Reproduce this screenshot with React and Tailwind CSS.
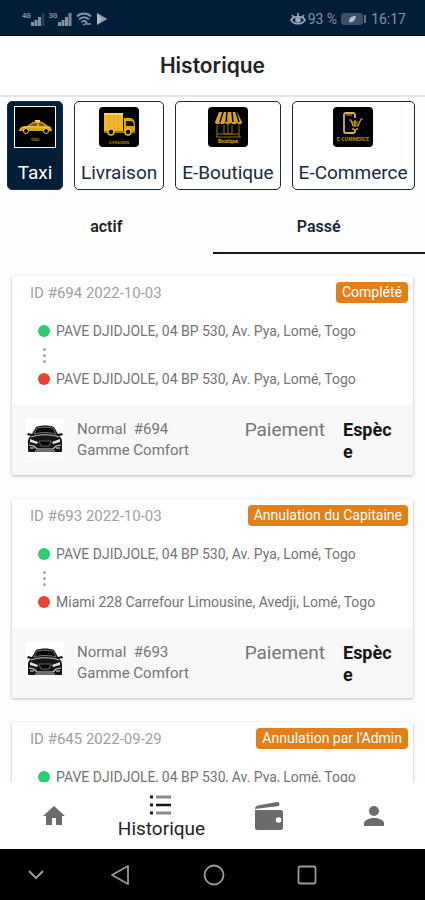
import React from "react";

function SignalBars({ label }) {
  return (
    <span className="flex items-start">
      <span className="text-[7px] leading-[8px] font-bold">{label}</span>
      <svg width="14" height="14" viewBox="0 0 14 14" fill="currentColor" aria-hidden="true">
        <rect x="0" y="10" width="3" height="4" />
        <rect x="3.500" y="8" width="3" height="6" />
        <rect x="7" y="5" width="3" height="9" />
        <rect x="10.500" y="1" width="3" height="13" opacity={label === "4G" ? 0.3 : 0.9} />
      </svg>
    </span>
  );
}

function StatusBar() {
  return (
    <div className="flex h-9 shrink-0 items-center justify-between border-b border-black bg-[#021d37] pt-0.5 pr-[19px] pl-[22px] text-[#8593a3]">
      <div className="flex items-center gap-1">
        <SignalBars label="4G" />
        <SignalBars label="3G" />
        <svg width="16" height="14" viewBox="0 0 16 14" fill="none" stroke="currentColor" strokeWidth="1.800" aria-hidden="true">
          <path d="M1 4.500C5 0.500 11 0.500 15 4.500M3 7.500c3-3 7-3 10 0M5.500 10c1.500-1.500 3.500-1.500 5 0" />
          <path d="M7 12.500h1.500M11 10l-1.500 2H15" strokeWidth="1.500" />
        </svg>
        <svg width="12" height="14" viewBox="0 0 12 14" aria-hidden="true">
          <path d="M1 1l10.500 6L1 13z" fill="#8f9baa" />
          <path d="M1 1l5 6-5 6z" fill="#b5bdc6" />
        </svg>
      </div>
      <div className="flex items-center text-[15px] leading-5">
        <svg width="16" height="14" viewBox="0 0 16 14" fill="none" stroke="#a0abb7" strokeWidth="1.600" aria-hidden="true">
          <path d="M1 8c3-4.500 11-4.500 14 0-3 5-11 5-14 0z" />
          <circle cx="8" cy="8" r="2" fill="#a0abb7" />
          <path d="M2 3l1.500 2M8 1v3M14 3l-1.500 2" />
        </svg>
        <span className="ml-0.5 text-[14px]">93 %</span>
        <svg className="mx-1" width="26" height="14" viewBox="0 0 26 14" aria-hidden="true">
          <rect x="0" y="1" width="22" height="12" rx="3" fill="#3c5064" />
          <path d="M8 10c0-4 2-6 7-6-1 5-3 7-7 6z" fill="#b4bdc6" />
          <path d="M24 3v8" stroke="#66788a" strokeWidth="2" />
        </svg>
        <span className="text-[14px]">16:17</span>
      </div>
    </div>
  );
}

const gold = "#d9a520";

function TaxiArt() {
  return (
    <svg className="size-full" viewBox="0 0 40 40" aria-hidden="true">
      <path d="M4 24c0-3 3-5 8-5l6-4c4-1 8-1 11 1l4 3c3 0 4 3 4 5z" fill={gold} />
      <path d="M14 19l5-3h3v3zM24 16h3l3 3h-6z" fill="#7d5a0a" />
      <path d="M20 15v-2h5v2z" fill="#f4ce55" />
      <path d="M6 21c7-2 20-1 29 0" stroke="#f4ce55" fill="none" />
      <circle cx="11" cy="24" r="2.500" fill="#000" stroke="#f0c23a" />
      <circle cx="31" cy="24" r="2.500" fill="#000" stroke="#f0c23a" />
      <text x="20" y="34" textAnchor="middle" fontSize="4" fontWeight="700" fill="#a98118">TAXI</text>
    </svg>
  );
}

function TruckArt() {
  return (
    <svg className="size-full" viewBox="0 0 40 40" aria-hidden="true">
      <rect x="5" y="6" width="19" height="18" fill="#efb72c" />
      <path d="M5 6h19v2H5z" fill="#f8d465" />
      <path d="M10 8v16M15 8v16M19 8v16" stroke="#cf9a24" strokeWidth="0.600" />
      <path d="M25 11h6c4 0 5 4 5 7v7H25z" fill={gold} />
      <path d="M27 14h5c2 0 3 3 3 5h-8z" fill="#1c1503" />
      <path d="M5 24h31v2H5z" fill="#a77410" />
      <circle cx="12" cy="25" r="3" fill="#000" stroke="#efb72c" strokeWidth="1.500" />
      <circle cx="29" cy="25" r="3" fill="#000" stroke="#efb72c" strokeWidth="1.500" />
      <text x="20" y="37" textAnchor="middle" fontSize="4" fontWeight="700" fill="#a98118">LIVRAISON</text>
    </svg>
  );
}

function ShopArt() {
  return (
    <svg className="size-full" viewBox="0 0 40 40" aria-hidden="true">
      <path d="M11 5h18l5 10c0 3-5 3-5 0 0 3-6 3-6 0 0 3-6 3-6 0 0 3-5 3-5 0 0 3-5 3-5 0z" fill={gold} />
      <path d="M15 5l-3 10M19 5l-1 10M24 5l1 10M28 5l3 10" stroke="#000" strokeWidth="1.500" />
      <path d="M9 18v12M31 18v12M8 30h25M16 18v9h8v-9M20 11v16M9 27h22" stroke="#96701a" fill="none" />
      <text x="20" y="36" textAnchor="middle" fontSize="5" fontWeight="700" fill={gold}>Boutique</text>
    </svg>
  );
}

function CommerceArt() {
  return (
    <svg className="size-full" viewBox="0 0 40 40" aria-hidden="true">
      <path d="M22 11V8c0-1-1-2-2-2h-7c-1 0-2 1-2 2v16c0 1 1 2 2 2h7c1 0 2-1 2-2v-2" fill="none" stroke="#d6b159" strokeWidth="1.800" />
      <path d="M13 8h6" stroke="#d6b159" />
      <path d="M16 13h2l2 6h5l3-7h2M19 15h6M20 17h6M22 13v6" fill="none" stroke={gold} strokeWidth="1.200" />
      <circle cx="20" cy="22" r="1" fill={gold} />
      <circle cx="24" cy="22" r="1" fill={gold} />
      <text x="20" y="34" textAnchor="middle" fontSize="5" fontWeight="700" fill="#b48b25">E-COMMERCE</text>
    </svg>
  );
}

const services = [
  { name: "Taxi", Art: TaxiArt, selected: true },
  { name: "Livraison", Art: TruckArt },
  { name: "E-Boutique", Art: ShopArt },
  { name: "E-Commerce", Art: CommerceArt },
];

function ServiceButton({ name, Art, selected }) {
  return (
    <button
      type="button"
      aria-pressed={Boolean(selected)}
      className={
        "flex flex-col items-center justify-between rounded-[5px] border border-[#1c2b3b] px-1.5 pt-1 pb-[3px] " +
        (selected ? "bg-[#021d37] text-white" : "bg-white text-[#182b40]")
      }
    >
      <span
        className={
          "block overflow-hidden bg-black " +
          (selected ? "size-[42px] border border-white" : "mt-px size-10 rounded-[4px]")
        }
      >
        <Art />
      </span>
      <span className="text-[19px] leading-[26px]">{name}</span>
    </button>
  );
}

function CarIcon() {
  return (
    <svg className="shrink-0 bg-white" width="38" height="38" viewBox="0 0 38 38" aria-hidden="true">
      <path d="M10 8c5-2 13-2 18 0l4 7 4-1 1 2-4 1c3 2 3 4 3 7v8c0 1-1 1-2 1H4c-1 0-2 0-2-1v-8c0-3 0-5 3-7l-4-1 1-2 4 1z" fill="#151515" />
      <path d="M11 9c5-1 11-1 16 0l3 6c-6-2-16-2-22 0z" fill="#000" stroke="#8a8a8a" strokeWidth="0.800" />
      <path d="M5 18c8-3 20-3 28 0" stroke="#c4c4c4" fill="none" />
      <path d="M4 20l8 3-1 2-7-2zM34 20l-8 3 1 2 7-2z" fill="#e2e2e2" />
      <path d="M13 22h12l-2 5h-8z" fill="#000" stroke="#777" strokeWidth="0.800" />
      <path d="M3 26l5 1 3 3h16l3-3 5-1" stroke="#d4d4d4" strokeWidth="1.200" fill="none" />
      <path d="M9 32h20" stroke="#a8a8a8" strokeWidth="1.200" />
      <path d="M4 29h4M30 29h4" stroke="#eee" strokeWidth="1.200" />
    </svg>
  );
}

const trips = [
  {
    id: "694",
    date: "2022-10-03",
    status: "Complété",
    from: "PAVE DJIDJOLE, 04 BP 530, Av. Pya, Lomé, Togo",
    to: "PAVE DJIDJOLE, 04 BP 530, Av. Pya, Lomé, Togo",
  },
  {
    id: "693",
    date: "2022-10-03",
    status: "Annulation du Capitaine",
    from: "PAVE DJIDJOLE, 04 BP 530, Av. Pya, Lomé, Togo",
    to: "Miami 228 Carrefour Limousine, Avedji, Lomé, Togo",
  },
  {
    id: "645",
    date: "2022-09-29",
    status: "Annulation par l'Admin",
    from: "PAVE DJIDJOLE, 04 BP 530, Av. Pya, Lomé, Togo",
  },
];

function Stop({ color, children }) {
  return (
    <div className="flex items-center gap-1.5">
      <span className={"size-3 shrink-0 rounded-full " + color} />
      <span className="text-[14px] leading-5 whitespace-nowrap text-[#737373]">{children}</span>
    </div>
  );
}

function TripCard({ trip }) {
  return (
    <article className="shrink-0 bg-white shadow-[0_1px_3px_rgba(0,0,0,0.28)]">
      <div className="flex items-center justify-between pt-1.5 pr-[5px] pl-[18px]">
        <h2 className="text-[15px] leading-5 text-[#a0a0a0]">
          ID #{trip.id} {trip.date}
        </h2>
        <span className="rounded-[4px] bg-[#e17f1a] px-1.5 text-[14px] leading-[21px] text-white">{trip.status}</span>
      </div>
      <div className="flex flex-col pt-[18px] pb-4 pl-[26px]">
        <Stop color="bg-[#2ecc71]">{trip.from}</Stop>
        {trip.to && (
          <>
            <div className="flex h-7 w-3 flex-col items-center justify-center gap-[3px]">
              <span className="size-[3px] rounded-full bg-[#a3a3a3]" />
              <span className="size-[3px] rounded-full bg-[#a3a3a3]" />
              <span className="size-[3px] rounded-full bg-[#a3a3a3]" />
            </div>
            <Stop color="bg-[#ea4335]">{trip.to}</Stop>
          </>
        )}
      </div>
      {trip.to && (
        <div className="flex h-[70px] items-start bg-[#f8f8f8] pt-3.5 pr-4 pl-3.5 text-[#757575]">
          <CarIcon />
          <p className="ml-[13px] text-[15px] leading-[21px]">
            <span className="whitespace-pre">Normal  #{trip.id}</span>
            <br />
            Gamme Comfort
          </p>
          <span className="ml-auto text-[19px] leading-[22px]">Paiement</span>
          <strong className="ml-[18px] w-[54px] text-[18px] leading-[22px] font-bold break-all text-[#151515]">Espèce</strong>
        </div>
      )}
    </article>
  );
}

function BottomNav() {
  return (
    <nav className="grid h-[67px] shrink-0 grid-cols-[1fr_1fr_1fr_102px] bg-white text-[#6b6b6b]">
      <a href="#accueil" aria-label="Accueil" className="flex items-center justify-center">
        <svg width="24" height="24" viewBox="0 0 24 24" fill="currentColor" aria-hidden="true">
          <path d="M10 21v-7h4v7h6v-9h3L12 2 1 12h3v9z" />
        </svg>
      </a>
      <a href="#historique" aria-current="page" className="flex flex-col items-center justify-center gap-px pt-1 text-[#222]">
        <svg width="24" height="22" viewBox="0 0 24 22" aria-hidden="true">
          <path d="M1 3h3M1 11h3M1 19h3" stroke="#161616" strokeWidth="3" />
          <path d="M7 3h15M7 19h15" stroke="#858992" strokeWidth="3" />
          <path d="M7 11h15" stroke="#161616" strokeWidth="2.500" />
        </svg>
        <span className="text-[19px] leading-6">Historique</span>
      </a>
      <a href="#portefeuille" aria-label="Portefeuille" className="flex items-center justify-center">
        <svg width="30" height="30" viewBox="0 0 30 30" fill="currentColor" aria-hidden="true">
          <path d="M1 8c0-2 1-3 3-3.500L23 1c2 0 3 2 2 4L5 7.500z" />
          <path d="M1 9h26c1.500 0 2 1 2 2v16c0 1-1 2-2 2H3c-1 0-2-1-2-2z" />
          <circle cx="24.500" cy="19" r="2.800" fill="#fff" />
        </svg>
      </a>
      <a href="#profil" aria-label="Profil" className="flex items-center justify-center">
        <svg width="20" height="20" viewBox="0 0 20 20" fill="currentColor" aria-hidden="true">
          <circle cx="10" cy="5" r="5" />
          <path d="M0 20v-3c0-3 6-5 10-5s10 2 10 5v3z" />
        </svg>
      </a>
    </nav>
  );
}

function SystemBar() {
  return (
    <div className="flex h-[51px] shrink-0 items-center justify-between bg-black pr-[108px] pl-[26px] text-[#9b9b9b]">
      <button type="button" aria-label="Masquer">
        <svg width="20" height="20" viewBox="0 0 20 20" fill="none" stroke="currentColor" strokeWidth="2" aria-hidden="true">
          <path d="M3 6l7 7 7-7" />
        </svg>
      </button>
      <button type="button" aria-label="Retour" className="-ml-2">
        <svg width="20" height="22" viewBox="0 0 20 22" fill="none" stroke="currentColor" strokeWidth="1.800" strokeLinejoin="round" aria-hidden="true">
          <path d="M18 2v18L2 11z" />
        </svg>
      </button>
      <button type="button" aria-label="Écran d'accueil">
        <svg width="22" height="22" viewBox="0 0 22 22" fill="none" stroke="currentColor" strokeWidth="1.800" aria-hidden="true">
          <circle cx="11" cy="11" r="9.500" />
        </svg>
      </button>
      <button type="button" aria-label="Applications récentes">
        <svg width="20" height="20" viewBox="0 0 20 20" fill="none" stroke="currentColor" strokeWidth="1.800" aria-hidden="true">
          <rect x="1.500" y="1.500" width="17" height="17" rx="1.500" />
        </svg>
      </button>
    </div>
  );
}

export default function App() {
  return (
    <div className="flex h-screen flex-col overflow-hidden bg-[#fefefe] font-['Roboto',sans-serif]">
      <StatusBar />
      <header className="flex h-[61px] shrink-0 items-center justify-center border-b-2 border-[#e4e4e4] bg-white">
        <h1 className="font-['Inter',sans-serif] text-[21px] leading-6 font-semibold text-[#222]">Historique</h1>
      </header>
      <div className="flex h-[97px] shrink-0 gap-[11px] px-[7px] pt-1 pb-1">
        {services.map((s) => (
          <ServiceButton key={s.name} {...s} />
        ))}
      </div>
      <div role="tablist" className="grid h-[60px] shrink-0 grid-cols-2 text-[16px] leading-5 font-semibold text-[#222]">
        <button type="button" role="tab" aria-selected="false" className="border-b-2 border-transparent pt-2">
          actif
        </button>
        <button type="button" role="tab" aria-selected="true" className="border-b-2 border-[#111820] pt-2 text-[#182636]">
          Passé
        </button>
      </div>
      <main className="mt-4 flex min-h-0 flex-1 flex-col gap-6 overflow-hidden px-3 pt-1.5">
        {trips.map((trip) => (
          <TripCard key={trip.id} trip={trip} />
        ))}
      </main>
      <BottomNav />
      <SystemBar />
    </div>
  );
}
